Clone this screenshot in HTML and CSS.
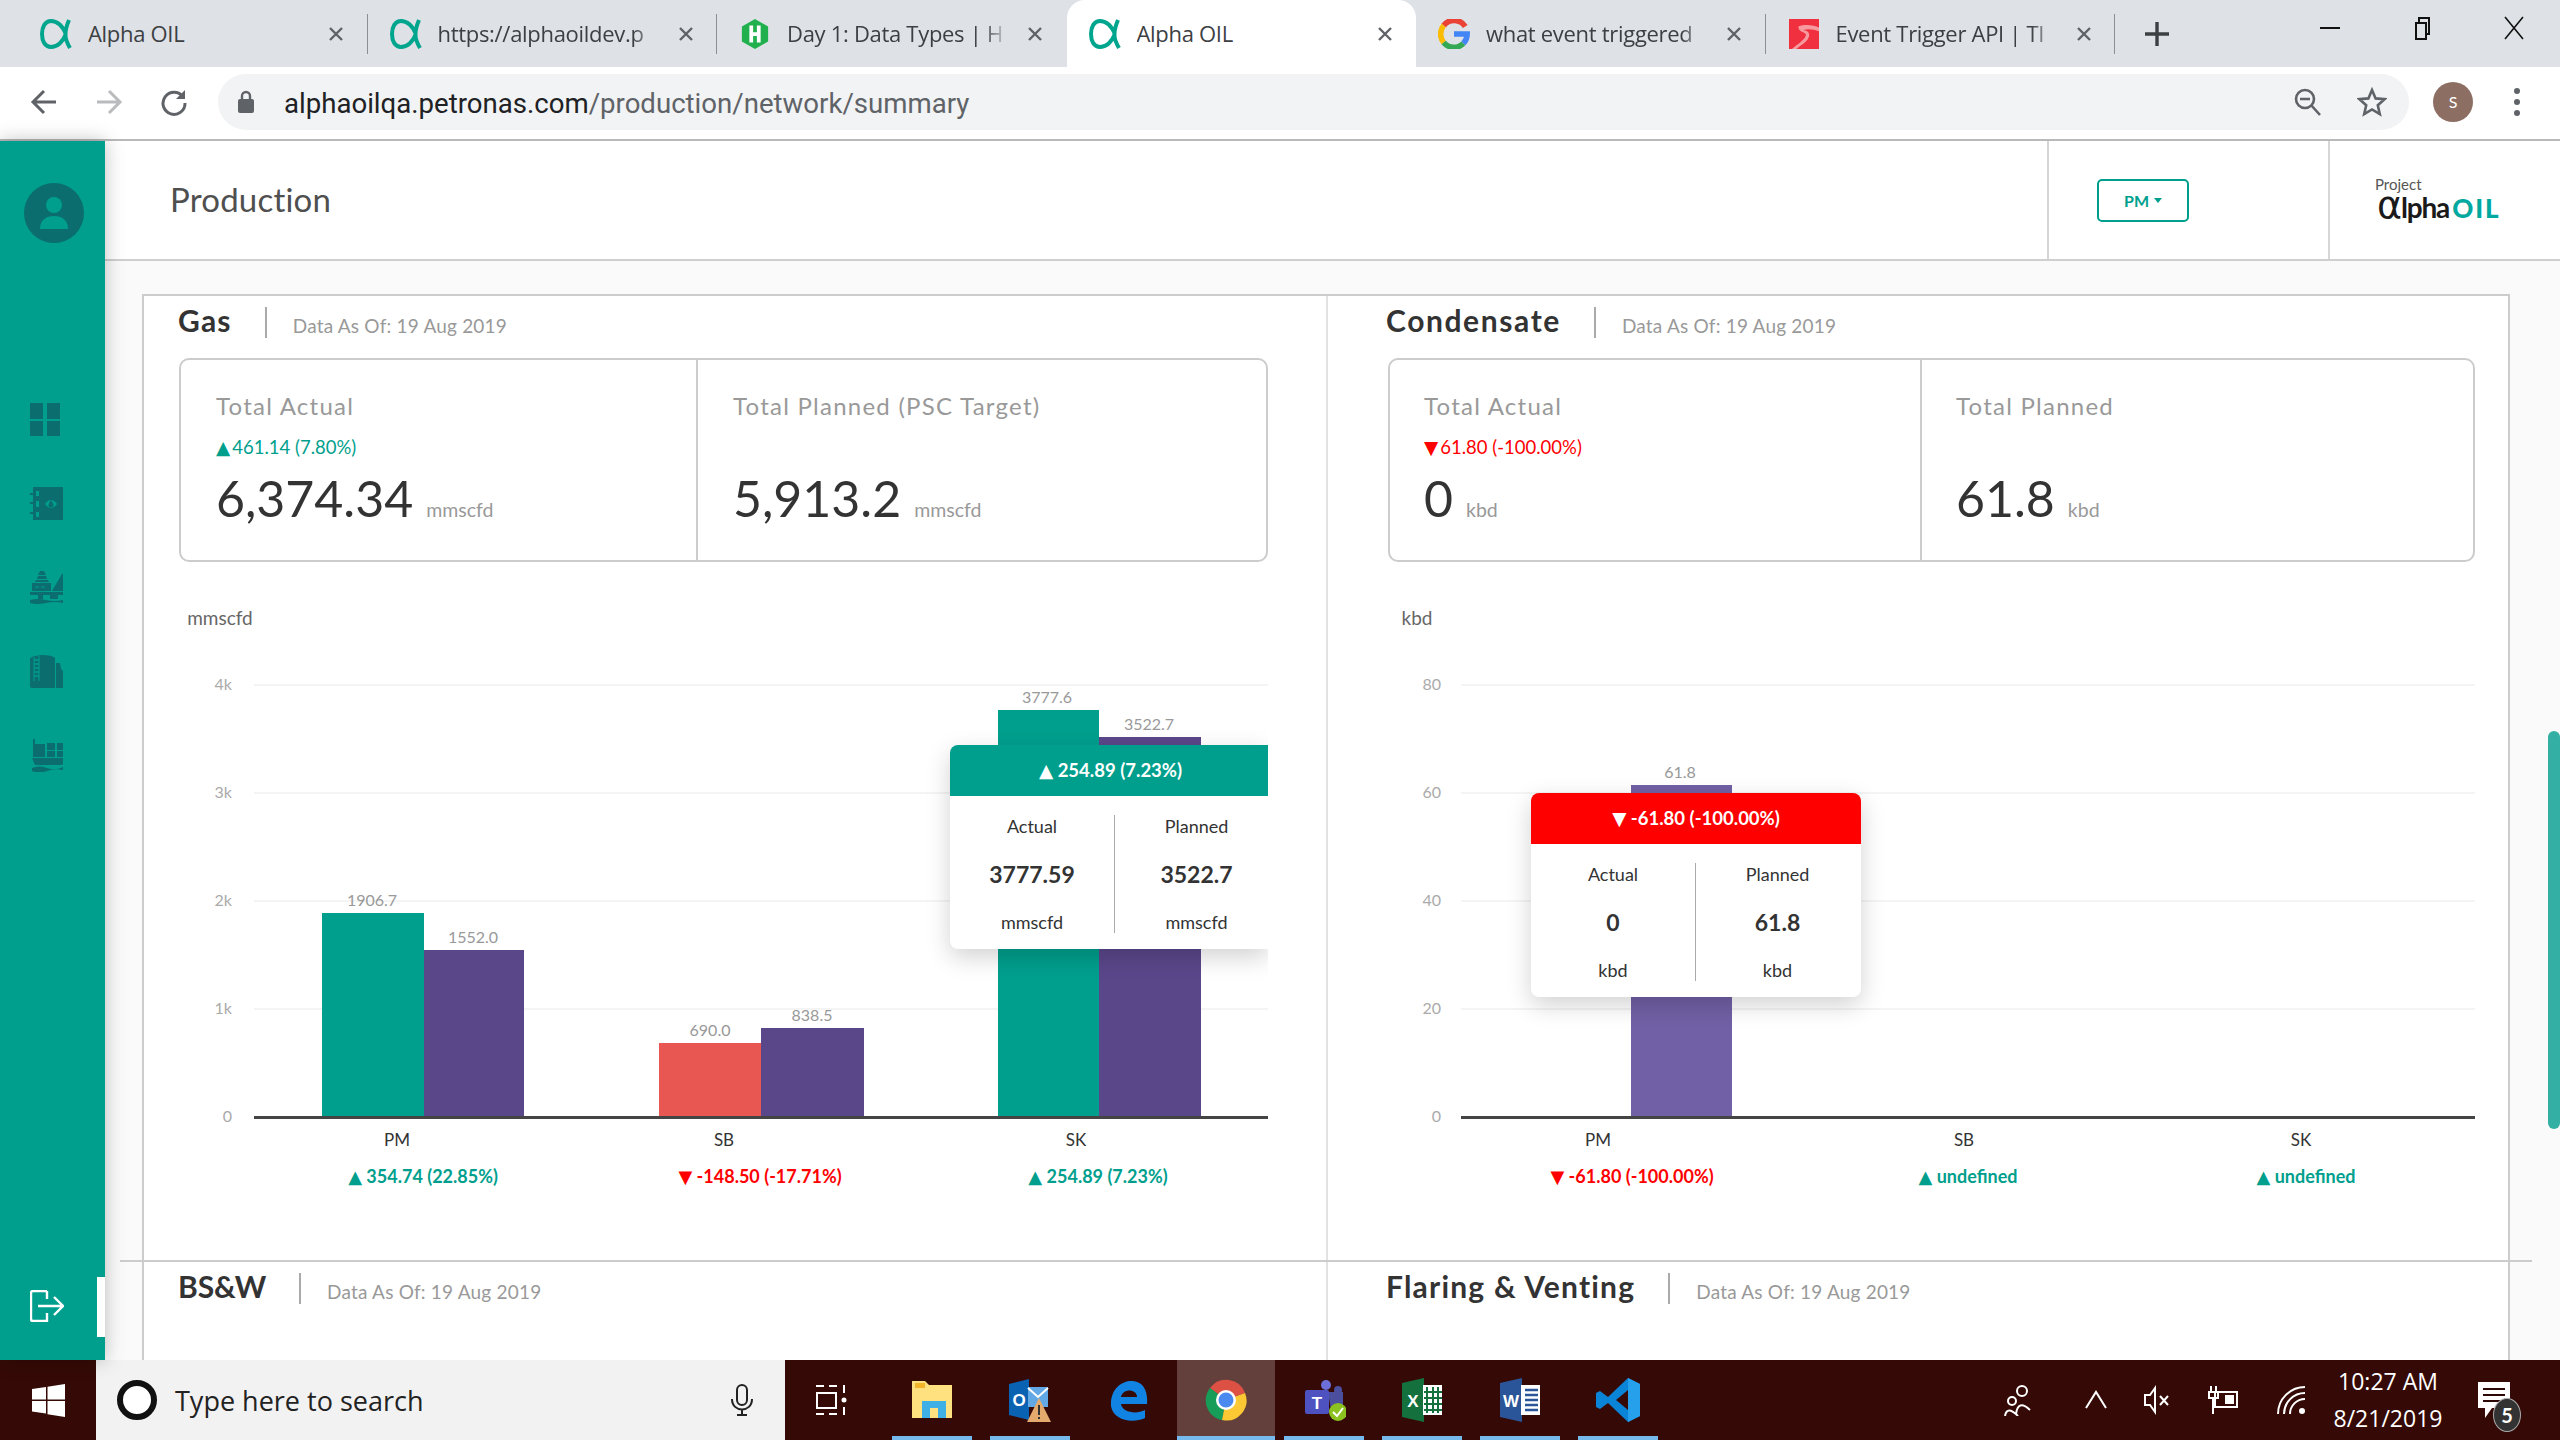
FILE: index.html
```html
<!DOCTYPE html>
<html lang="en">
<head>
  <meta charset="UTF-8" />
  <meta name="viewport" content="width=device-width, initial-scale=1" />
  <title>Alpha OIL</title>
  <link rel="stylesheet" href="styles.css">
</head>
<body>
  <svg class="defs" width="0" height="0">
    <symbol id="alpha" viewBox="0 0 32 30">
      <path d="M29 1C24 13 24 19 30 29M26 15C22 6 16 2 11 2C5 2 2 8 2 15C2 22 5 28 11 28C16 28 22 24 26 15" fill="none" stroke="#00a58e" stroke-width="4"/>
    </symbol>
    <symbol id="x" viewBox="0 0 16 16">
      <path d="M2 2L14 14M14 2L2 14" fill="none" stroke="#5f6368" stroke-width="2.4"/>
    </symbol>
  </svg>

  <!-- browser tabs -->
  <div class="tabstrip">
    <div class="tab">
      <svg class="favicon"><use href="#alpha"/></svg>
      <span class="tab-title">Alpha OIL</span>
      <svg class="tab-x"><use href="#x"/></svg>
    </div>
    <div class="tab">
      <svg class="favicon"><use href="#alpha"/></svg>
      <span class="tab-title fade">https://alphaoildev.p</span>
      <svg class="tab-x"><use href="#x"/></svg>
    </div>
    <div class="tab no-sep">
      <svg class="favicon" viewBox="0 0 30 32"><path d="M15 0L29 8V24L15 32L1 24V8Z" fill="#20b04e"/><path d="M9 7H13V14H17V7H21V25H17V18H13V25H9Z" fill="#fff"/></svg>
      <span class="tab-title fade">Day 1: Data Types | H</span>
      <svg class="tab-x"><use href="#x"/></svg>
    </div>
    <div class="tab active">
      <svg class="favicon"><use href="#alpha"/></svg>
      <span class="tab-title">Alpha OIL</span>
      <svg class="tab-x"><use href="#x"/></svg>
    </div>
    <div class="tab">
      <svg class="favicon" viewBox="0 0 32 32">
        <path d="M28 8A14 14 0 0 0 5 7" fill="none" stroke="#ea4335" stroke-width="6"/>
        <path d="M5 7A14 14 0 0 0 5 25" fill="none" stroke="#fbbc05" stroke-width="6"/>
        <path d="M5 25A14 14 0 0 0 26 26" fill="none" stroke="#34a853" stroke-width="6"/>
        <path d="M26 26C29 23 30 20 30 16H16" fill="none" stroke="#4285f4" stroke-width="6"/>
      </svg>
      <span class="tab-title fade">what event triggered</span>
      <svg class="tab-x"><use href="#x"/></svg>
    </div>
    <div class="tab">
      <svg class="favicon" viewBox="0 0 32 32"><rect width="32" height="32" fill="#f0303e"/><path d="M10 8C18 5 27 7 32 9V13C26 11 20 10 15 12C22 12 24 18 18 24C15 27 11 29 8 32H3C9 27 19 21 18 16C14 13 10 13 10 8Z" fill="#f79aa0"/></svg>
      <span class="tab-title fade">Event Trigger API | TI</span>
      <svg class="tab-x"><use href="#x"/></svg>
    </div>
    <svg class="new-tab" viewBox="0 0 26 26"><path d="M13 1V25M1 13H25" stroke="#3c4043" stroke-width="3.4"/></svg>
    <div class="win-btns">
      <svg class="win-btn" viewBox="0 0 24 24"><path d="M2 12H22" stroke="#111" stroke-width="2"/></svg>
      <svg class="win-btn" viewBox="0 0 24 24"><path d="M6 7H16V23H6ZM9 7V2H19V18H16" fill="none" stroke="#111" stroke-width="2"/></svg>
      <svg class="win-btn" viewBox="0 0 24 24"><path d="M3 1L21 23M21 1L3 23" stroke="#111" stroke-width="1.6"/></svg>
    </div>
  </div>

  <!-- address bar -->
  <div class="toolbar">
    <svg class="tool-icon" viewBox="0 0 28 28"><path d="M26 14H4M14 3L3 14L14 25" fill="none" stroke="#5f6368" stroke-width="3"/></svg>
    <svg class="tool-icon" viewBox="0 0 28 28"><path d="M2 14H24M14 3L25 14L14 25" fill="none" stroke="#b9bbbe" stroke-width="3"/></svg>
    <svg class="tool-icon" viewBox="0 0 28 28"><path d="M23 9A11 11 0 1 0 25 15" fill="none" stroke="#5f6368" stroke-width="3"/><path d="M25 2V11H16Z" fill="#5f6368"/></svg>
    <div class="omnibox">
      <svg class="lock" viewBox="0 0 18 24"><path d="M5 10V6A4 4 0 0 1 13 6V10" fill="none" stroke="#5f6368" stroke-width="2.4"/><rect x="1" y="9" width="16" height="14" rx="2" fill="#5f6368"/></svg>
      <span class="url"><span class="url-host">alphaoilqa.petronas.com</span>/production/network/summary</span>
      <svg class="omni-icon" viewBox="0 0 30 30"><circle cx="12" cy="12" r="9" fill="none" stroke="#5f6368" stroke-width="2.6"/><path d="M7 12H17M18 18L27 28" stroke="#5f6368" stroke-width="2.6"/></svg>
      <svg class="omni-icon" viewBox="0 0 30 30"><path d="M15 3L18.6 11.4L27.6 12.2L20.8 18.2L22.8 27L15 22.4L7.2 27L9.2 18.2L2.4 12.2L11.4 11.4Z" fill="none" stroke="#5f6368" stroke-width="2.6"/></svg>
    </div>
    <div class="avatar">S</div>
    <div class="kebab"><i></i><i></i><i></i></div>
  </div>

  <div class="app">
    <aside class="sidebar">
      <svg class="side-user" viewBox="0 0 60 60">
        <circle cx="30" cy="30" r="30" fill="#0b6d6e"/>
        <circle cx="30" cy="22" r="8" fill="#009f8d"/>
        <path d="M16 46C16 37 22 33 30 33C38 33 44 37 44 46Z" fill="#009f8d"/>
      </svg>
      <svg class="side-icon first" viewBox="0 0 33 33"><path d="M0 0H13V16H0ZM17 0H30V16H17ZM0 18H13V33H0ZM17 18H30V33H17Z" fill="#0b6d6e"/></svg>
      <svg class="side-icon" viewBox="0 0 33 33"><path d="M3 0H33V33H3V27H0V25H3V17H0V15H3V8H0V6H3Z" fill="#0b6d6e"/><path d="M6 4H9V9H6ZM6 14H9V20H6ZM6 25H9V30H6Z" fill="#009f8d"/><path d="M15 17Q21 9 27 17Q21 25 15 17Z" fill="#009f8d"/><path d="M21 13C19 16 18.5 17 18.5 18A2.500 2.500 0 0 0 23.5 18C23.5 17 23 16 21 13Z" fill="#0b6d6e"/></svg>
      <svg class="side-icon" viewBox="0 0 33 33"><path d="M10 0H14L16 4H8ZM8 5H16L17 8H7ZM6 9H18L19 11H5ZM2 12H21V20H2ZM22 20L32 3H33V20ZM0 21H33V24H28V28H20V24H13V28H8V24H0ZM0 29Q8 27 16 29T33 29V32Q25 30 16 32T0 32Z" fill="#0b6d6e"/><path d="M5 16H9M11 16H15" stroke="#009f8d"/></svg>
      <svg class="side-icon" viewBox="0 0 33 33"><path d="M0 4Q0 1 12 0Q22 0 25 3V33H2Q0 33 0 31ZM26 8H30L31 14L33 16V33H26Z" fill="#0b6d6e"/><path d="M4 2V26M9 1V26" stroke="#009f8d"/><path d="M4 5H9M4 9H9M4 13H9M4 17H9M4 21H9" stroke="#009f8d" stroke-width="1.500"/></svg>
      <svg class="side-icon" viewBox="0 0 33 33"><path d="M3 0H5V5H15V18H3ZM17 4H25V11H17ZM27 4H33V11H27ZM17 12H25V18H17ZM27 12H33V18H27ZM2 19H33V25Q33 26 30 26H5ZM2 29Q9 26 17 29T33 28V31Q25 29 17 32T2 32Z" fill="#0b6d6e"/></svg>
      <svg class="side-out" viewBox="0 0 34 32"><path d="M17 1H3Q1 1 1 3V29Q1 31 3 31H17V23M17 1V9M8 16H33M24 7L33 16L24 25" fill="none" stroke="#fff" stroke-width="2.400"/></svg>
      <div class="side-mark"></div>
    </aside>

    <main class="main">
      <header class="page-head">
        <div class="page-title">Production</div>
        <div class="head-cell pm-cell"><button class="pm-btn">PM</button></div>
        <div class="head-cell logo-cell">
          <div class="logo-project">Project</div>
          <div class="logo-name"><span class="logo-a">α</span>lpha<b>OIL</b></div>
        </div>
      </header>

      <div class="content">
        <div class="board">
          <section class="block">
            <div class="block-head">
              <h3>Gas</h3>
              <span class="as-of">Data As Of: 19 Aug 2019</span>
            </div>
            <div class="stats gas-stats">
              <div class="stat">
                <div class="stat-label">Total Actual</div>
                <div class="stat-delta up"><span class="tri">▲</span>461.14 (7.80%)</div>
                <div class="stat-value">6,374.34<small>mmscfd</small></div>
              </div>
              <div class="stat">
                <div class="stat-label">Total Planned (PSC Target)</div>
                <div class="stat-delta"></div>
                <div class="stat-value">5,913.2<small>mmscfd</small></div>
              </div>
            </div>
            <div class="chart">
              <svg class="chart-svg" width="1183" height="640" viewBox="144 600 1183 640">
                <text class="axis-unit" x="220" y="625">mmscfd</text>
                <g class="grid">
                  <path d="M254 685H1268M254 793H1268M254 901H1268M254 1009H1268"/>
                </g>
                <g class="y-label">
                  <text x="232" y="690">4k</text>
                  <text x="232" y="798">3k</text>
                  <text x="232" y="906">2k</text>
                  <text x="232" y="1014">1k</text>
                  <text x="232" y="1122">0</text>
                </g>
                <rect class="b-up" x="322" y="913" width="102" height="204"/>
                <rect class="b-plan" x="424" y="950" width="100" height="167"/>
                <rect class="b-down" x="659" y="1043" width="102" height="74"/>
                <rect class="b-plan" x="761" y="1028" width="103" height="89"/>
                <rect class="b-up" x="998" y="710" width="101" height="407"/>
                <rect class="b-plan" x="1099" y="737" width="102" height="380"/>
                <rect class="axis" x="254" y="1116" width="1014" height="3"/>
                <g class="bar-val">
                  <text x="372" y="906">1906.7</text>
                  <text x="473" y="943">1552.0</text>
                  <text x="710" y="1036">690.0</text>
                  <text x="812" y="1021">838.5</text>
                  <text x="1047" y="703">3777.6</text>
                  <text x="1149" y="730">3522.7</text>
                </g>
                <g class="cat">
                  <text x="397" y="1146">PM</text>
                  <text x="724" y="1146">SB</text>
                  <text x="1076" y="1146">SK</text>
                </g>
                <g class="cat-delta">
                  <text class="up" x="423" y="1183"><tspan class="tri">▲</tspan> 354.74 (22.85%)</text>
                  <text class="down" x="760" y="1183"><tspan class="tri">▼</tspan> -148.50 (-17.71%)</text>
                  <text class="up" x="1098" y="1183"><tspan class="tri">▲</tspan> 254.89 (7.23%)</text>
                </g>
              </svg>
              <div class="tip tip-gas">
                <div class="tip-head"><span class="tri">▲</span> 254.89 (7.23%)</div>
                <div class="tip-body">
                  <div class="tip-col"><span>Actual</span><b>3777.59</b><span>mmscfd</span></div>
                  <div class="tip-col"><span>Planned</span><b>3522.7</b><span>mmscfd</span></div>
                </div>
              </div>
            </div>
          </section>

          <section class="block right">
            <div class="block-head">
              <h3 class="wide">Condensate</h3>
              <span class="as-of">Data As Of: 19 Aug 2019</span>
            </div>
            <div class="stats cond-stats">
              <div class="stat">
                <div class="stat-label">Total Actual</div>
                <div class="stat-delta down"><span class="tri">▼</span>61.80 (-100.00%)</div>
                <div class="stat-value">0<small>kbd</small></div>
              </div>
              <div class="stat">
                <div class="stat-label">Total Planned</div>
                <div class="stat-delta"></div>
                <div class="stat-value">61.8<small>kbd</small></div>
              </div>
            </div>
            <div class="chart">
              <svg class="chart-svg" width="1180" height="640" viewBox="1328 600 1180 640">
                <text class="axis-unit" x="1417" y="625">kbd</text>
                <g class="grid">
                  <path d="M1461 685H2475M1461 793H2475M1461 901H2475M1461 1009H2475"/>
                </g>
                <g class="y-label">
                  <text x="1441" y="690">80</text>
                  <text x="1441" y="798">60</text>
                  <text x="1441" y="906">40</text>
                  <text x="1441" y="1014">20</text>
                  <text x="1441" y="1122">0</text>
                </g>
                <rect class="b-plan-hi" x="1631" y="785" width="101" height="332"/>
                <rect class="axis" x="1461" y="1116" width="1014" height="3"/>
                <g class="bar-val">
                  <text x="1680" y="778">61.8</text>
                </g>
                <g class="cat">
                  <text x="1598" y="1146">PM</text>
                  <text x="1964" y="1146">SB</text>
                  <text x="2301" y="1146">SK</text>
                </g>
                <g class="cat-delta">
                  <text class="down" x="1632" y="1183"><tspan class="tri">▼</tspan> -61.80 (-100.00%)</text>
                  <text class="up" x="1968" y="1183"><tspan class="tri">▲</tspan> undefined</text>
                  <text class="up" x="2306" y="1183"><tspan class="tri">▲</tspan> undefined</text>
                </g>
              </svg>
              <div class="tip tip-cond">
                <div class="tip-head"><span class="tri">▼</span> -61.80 (-100.00%)</div>
                <div class="tip-body">
                  <div class="tip-col"><span>Actual</span><b>0</b><span>kbd</span></div>
                  <div class="tip-col"><span>Planned</span><b>61.8</b><span>kbd</span></div>
                </div>
              </div>
            </div>
          </section>
        </div>

        <div class="board-rule"></div>

        <div class="board lower">
          <section class="block">
            <div class="block-head">
              <h3 class="tight">BS&amp;W</h3>
              <span class="as-of">Data As Of: 19 Aug 2019</span>
            </div>
          </section>
          <section class="block right">
            <div class="block-head">
              <h3>Flaring &amp; Venting</h3>
              <span class="as-of">Data As Of: 19 Aug 2019</span>
            </div>
          </section>
        </div>
        <div class="scroll-thumb"></div>
      </div>
    </main>
  </div>

  <!-- windows taskbar -->
  <footer class="taskbar">
    <div class="start">
      <svg viewBox="0 0 33 33" width="33" height="33"><path d="M0 5L14 3V15.500H0ZM15.500 2.800L33 0V15.500H15.500ZM0 17H14V29.500L0 27.500ZM15.500 17H33V33L15.500 30.300Z" fill="#fff"/></svg>
    </div>
    <div class="search">
      <span class="cortana"></span>
      <span class="search-text">Type here to search</span>
      <svg class="mic" viewBox="0 0 24 32"><rect x="7" y="1" width="10" height="20" rx="5" fill="none" stroke="#222" stroke-width="2"/><path d="M2 15C2 29 22 29 22 15M12 25V31M7 31H17" fill="none" stroke="#222" stroke-width="2"/></svg>
    </div>
    <div class="task task-view">
      <svg viewBox="0 0 32 32" width="32" height="32"><path d="M1 2H9M14 2H22M1 30H9M14 30H22" stroke="#fff" stroke-width="2"/><rect x="2" y="9" width="19" height="15" fill="none" stroke="#fff" stroke-width="2"/><circle cx="29" cy="16" r="2.500" fill="#fff"/><path d="M29 1V9M29 23V31" stroke="#fff" stroke-width="2"/></svg>
    </div>
    <div class="task open">
      <svg viewBox="0 0 42 42" width="42" height="42"><path d="M1 2H14L18 6H41V39H1Z" fill="#ffe27f"/><path d="M4 4H14V9H4Z" fill="#f5b52a"/><path d="M11 22H35V39H27V29H19V39H11Z" fill="#3fb0e6"/></svg>
    </div>
    <div class="task open">
      <svg viewBox="0 0 44 44" width="44" height="44"><path d="M1 6L21 1V42L1 37Z" fill="#0a62b3"/><rect x="20" y="9" width="20" height="20" fill="#62a8e5"/><path d="M20 10L30 19L40 10" fill="none" stroke="#fff" stroke-width="2"/><text x="11" y="28" class="app-letter">O</text><path d="M31 20L43 44H19Z" fill="#e3a96d"/><path d="M30 27H32V37H30ZM30 39H32V41H30Z" fill="#333"/></svg>
    </div>
    <div class="task">
      <svg viewBox="0 0 44 44" width="44" height="44"><path d="M5 28C4 10 17 2 27 3C38 4 42 14 41 26H15C16 34 30 37 39 32V40C26 46 7 42 5 28ZM15 19H31C31 11 17 10 15 19Z" fill="#1183e3"/></svg>
    </div>
    <div class="task running">
      <svg viewBox="0 0 44 44" width="44" height="44">
        <path d="M22 22L6 10A20 20 0 0 1 41 15Z" fill="#dd5044"/>
        <path d="M22 22L6 10A20 20 0 0 0 18 42Z" fill="#189d58"/>
        <path d="M22 22L41 15A20 20 0 0 1 18 42Z" fill="#fcc934"/>
        <circle cx="22" cy="22" r="10" fill="#fff"/><circle cx="22" cy="22" r="7.500" fill="#4a8af0"/>
      </svg>
    </div>
    <div class="task open">
      <svg viewBox="0 0 44 44" width="44" height="44"><circle cx="24" cy="7" r="5" fill="#6b6fd6"/><circle cx="36" cy="12" r="4" fill="#4c4f9e"/><path d="M26 14H41V28Q41 38 30 38Z" fill="#4c4f9e"/><rect x="3" y="12" width="24" height="24" rx="2" fill="#4d52c0"/><text x="15" y="31" class="app-letter">T</text><circle cx="36" cy="34" r="9" fill="#8bc220"/><path d="M31 34L35 38L41 30" fill="none" stroke="#fff" stroke-width="2"/></svg>
    </div>
    <div class="task open">
      <svg viewBox="0 0 44 44" width="44" height="44"><path d="M2 5L24 0V44L2 39Z" fill="#14713d"/><rect x="23" y="7" width="19" height="30" fill="#fff"/><path d="M27 9V35M33 9V35M38 9V35M24 14H42M24 20H42M24 26H42M24 32H42" stroke="#14713d" stroke-width="2"/><text x="13" y="29" class="app-letter">X</text></svg>
    </div>
    <div class="task open">
      <svg viewBox="0 0 44 44" width="44" height="44"><path d="M2 5L24 0V44L2 39Z" fill="#2a5699"/><rect x="23" y="7" width="19" height="30" fill="#fff"/><path d="M27 12H40M27 17H40M27 22H40M27 27H40M27 32H40" stroke="#2a5699" stroke-width="2.600"/><text x="13" y="29" class="app-letter">W</text></svg>
    </div>
    <div class="task open">
      <svg viewBox="0 0 44 44" width="44" height="44"><path d="M32 0L44 6V38L32 44L12 25L4 31L0 29V15L4 13L12 19ZM32 12L20 22L32 32Z" fill="#0a84d6"/><path d="M32 0L44 6V38L32 44Z" fill="#26a0ea"/></svg>
    </div>
    <div class="tray">
      <svg class="tray-icon" viewBox="0 0 32 32"><circle cx="20" cy="7" r="5" fill="none" stroke="#fff" stroke-width="2"/><circle cx="10" cy="17" r="4" fill="none" stroke="#fff" stroke-width="2"/><path d="M14 30Q16 15 28 26M3 32Q5 21 16 32" fill="none" stroke="#fff" stroke-width="2"/></svg>
      <svg class="tray-icon" viewBox="0 0 32 32"><path d="M6 24L16 8L26 24" fill="none" stroke="#fff" stroke-width="2"/></svg>
      <svg class="tray-icon" viewBox="0 0 32 32"><path d="M5 11H10L15 4V28L10 21H5ZM20 12L28 21M28 12L20 21" fill="none" stroke="#fff" stroke-width="2"/></svg>
      <svg class="tray-icon" viewBox="0 0 32 32"><rect x="8" y="8" width="22" height="15" fill="none" stroke="#fff" stroke-width="2"/><rect x="18" y="11" width="9" height="9" fill="#fff"/><path d="M4 2V8M9 2V8M2 8H11V14H2ZM6 14V30" fill="none" stroke="#fff" stroke-width="2"/></svg>
      <svg class="tray-icon" viewBox="0 0 32 32"><path d="M3 30A27 27 0 0 1 30 3M9 30A21 21 0 0 1 30 9M15 30A15 15 0 0 1 30 15" fill="none" stroke="#fff" stroke-width="2"/><circle cx="27" cy="27" r="3" fill="#fff"/></svg>
      <div class="clock"><div>10:27 AM</div><div>8/21/2019</div></div>
      <div class="notify">
        <svg viewBox="0 0 32 36" width="32" height="36"><path d="M0 0H32V26H14L7 36V26H0Z" fill="#fff"/><path d="M5 7H27M5 13H27M5 19H27" stroke="#2b0806" stroke-width="2"/></svg>
        <span class="badge">5</span>
      </div>
    </div>
  </footer>
</body>
</html>
```

FILE: styles.css
```css
* {
  box-sizing: border-box;
}

html, body {
  margin: 0;
  width: 2560px;
  height: 1440px;
  overflow: hidden;
}

body {
  display: flex;
  flex-direction: column;
  font-family: "Lato", "Open Sans", sans-serif;
  background: #fff;
  color: #333;
}

.defs {
  position: absolute;
}

/* tabs */
.tabstrip {
  display: flex;
  align-items: stretch;
  height: 67px;
  padding-left: 18px;
  background: #dee1e6;
  font-family: "Open Sans", sans-serif;
  font-size: 22px;
  color: #3c4043;
}

.tab {
  position: relative;
  display: flex;
  align-items: center;
  width: 349.5px;
  padding-left: 22px;
  flex-shrink: 0;
}

.tab::after {
  content: "";
  position: absolute;
  right: 0;
  top: 14px;
  height: 40px;
  width: 1px;
  background: #8b8e93;
}

.tab.no-sep::after,
.tab.active::after {
  display: none;
}

.tab.active {
  background: #fff;
  border-radius: 18px 18px 0 0;
}

.favicon {
  width: 32px;
  height: 30px;
  flex-shrink: 0;
}

.tab-title {
  margin: -2px 0 0 16px;
  width: 222px;
  overflow: hidden;
  white-space: nowrap;
  letter-spacing: -0.3px;
}

.tab-title.fade {
  -webkit-mask-image: linear-gradient(to right, #000 88%, transparent 100%);
  mask-image: linear-gradient(to right, #000 88%, transparent 100%);
}

.tab-x {
  width: 16px;
  height: 16px;
  margin-left: 18px;
  flex-shrink: 0;
}

.new-tab {
  width: 26px;
  height: 26px;
  margin: 21px 0 0 29px;
}

.win-btns {
  display: flex;
  margin-left: auto;
  gap: 68px;
  padding: 16px 34px 0 0;
}

.win-btn {
  width: 24px;
  height: 24px;
}

/* address bar */
.toolbar {
  display: flex;
  align-items: center;
  height: 74px;
  padding: 0 0 2px 30px;
  border-bottom: 2px solid #b9b9b9;
}

.tool-icon {
  width: 28px;
  height: 28px;
  margin-right: 37px;
}

.tool-icon:nth-child(3) {
  margin-right: 30px;
}

.omnibox {
  display: flex;
  align-items: center;
  width: 2191px;
  height: 56px;
  padding: 0 22px 0 19px;
  background: #f1f3f4;
  border-radius: 28px;
  font-family: "Roboto", sans-serif;
  font-size: 27.6px;
  color: #5f6368;
}

.lock {
  width: 18px;
  height: 24px;
  margin-right: 29px;
}

.url {
  flex: 1;
  padding-top: 2px;
}

.url-host {
  color: #202124;
}

.omni-icon {
  width: 30px;
  height: 30px;
  margin-left: 34px;
}

.avatar {
  width: 40px;
  height: 40px;
  margin-left: 24px;
  border-radius: 50%;
  background: #8d6e63;
  color: #fff;
  font-size: 16px;
  line-height: 40px;
  text-align: center;
}

.kebab {
  display: flex;
  flex-direction: column;
  gap: 5px;
  margin-left: 41px;
}

.kebab i {
  width: 6px;
  height: 6px;
  border-radius: 50%;
  background: #5f6368;
}

/* app shell */
.app {
  display: flex;
  height: 1219px;
}

.sidebar {
  position: relative;
  z-index: 2;
  display: flex;
  flex-direction: column;
  width: 105px;
  padding-left: 30px;
  background: #009f8d;
  box-shadow: 0 0 18px rgba(0, 0, 0, 0.25);
}

.side-user {
  width: 60px;
  height: 60px;
  margin: 42px 0 0 -6px;
}

.side-icon {
  width: 33px;
  height: 33px;
  margin-top: 51px;
}

.side-icon.first {
  margin-top: 160px;
}

.side-out {
  width: 34px;
  height: 32px;
  margin-top: auto;
  margin-bottom: 38px;
}

.side-mark {
  position: absolute;
  right: 0;
  bottom: 23px;
  width: 8px;
  height: 60px;
  background: #fff;
}

.main {
  flex: 1;
  display: flex;
  flex-direction: column;
  min-width: 0;
}

.page-head {
  display: flex;
  align-items: stretch;
  height: 120px;
  border-bottom: 2px solid #cfcfcf;
  background: #fff;
}

.page-title {
  flex: 1;
  padding: 0 0 0 65px;
  font-size: 33px;
  letter-spacing: 0.2px;
  line-height: 116px;
  color: #4f4f4f;
}

.head-cell {
  border-left: 2px solid #d6d6d6;
}

.pm-cell {
  width: 281px;
  padding: 38px 0 0 48px;
}

.pm-btn {
  display: flex;
  align-items: center;
  justify-content: center;
  width: 92px;
  height: 43px;
  padding: 0;
  background: #fff;
  border: 2px solid #009f8d;
  border-radius: 5px;
  color: #009f8d;
  font-family: inherit;
  font-size: 16px;
  font-weight: 700;
}

.pm-btn::after {
  content: "";
  margin-left: 5px;
  border-left: 4px solid transparent;
  border-right: 4px solid transparent;
  border-top: 5px solid #009f8d;
}

.logo-cell {
  width: 232px;
  padding: 36px 0 0 45px;
}

.logo-project {
  font-size: 15px;
  font-weight: 400;
  line-height: 15px;
  color: #555;
}

.logo-name {
  display: flex;
  align-items: baseline;
  height: 30px;
  margin-left: 2px;
  font-size: 28px;
  font-weight: 700;
  line-height: 30px;
  letter-spacing: -1.2px;
  color: #1a1a1a;
}

.logo-a {
  font-family: "DejaVu Sans", sans-serif;
  font-size: 38px;
  font-weight: 400;
  line-height: 20px;
  letter-spacing: -1px;
}

.logo-name b {
  margin-left: 3px;
  letter-spacing: 2px;
  color: #00a8a0;
  font-weight: 900;
  font-size: 26px;
}

/* report */
.content {
  position: relative;
  flex: 1;
  padding: 33px 0 0 37px;
  background: #fafafa;
  overflow: hidden;
}

.board {
  display: flex;
  width: 2368px;
  height: 966px;
  background: #fff;
  border: 2px solid #ccc;
  border-bottom: 0;
}

.board.lower {
  height: 200px;
  border-top: 0;
}

.board-rule {
  width: 2412px;
  height: 2px;
  margin-left: -22px;
  background: #ccc;
}

.block {
  width: 1184px;
  border-right: 2px solid #e2e2e2;
  padding-left: 34px;
}

.block.right {
  width: 1180px;
  border-right: 0;
  padding-left: 58px;
}

.block-head {
  display: flex;
  align-items: center;
  height: 31px;
  margin-top: 11px;
}

.block-head h3 {
  height: 31px;
  margin: 0;
  padding-right: 33px;
  border-right: 2px solid #aaa;
  font-size: 30px;
  font-weight: 700;
  letter-spacing: 1.2px;
  line-height: 27px;
  color: #333;
}

.block-head h3.wide {
  letter-spacing: 1.6px;
}

.block-head h3.tight {
  letter-spacing: -0.1px;
}

.as-of {
  margin: 5px 0 0 26px;
  font-size: 19px;
  letter-spacing: 0.2px;
  color: #999;
}

.stats {
  display: flex;
  width: 1087px;
  height: 204px;
  margin: 20px 0 0 2px;
  border: 2px solid #ccc;
  border-radius: 10px;
}

.gas-stats {
  width: 1089px;
  margin-left: 1px;
}

.stat {
  padding: 29px 0 0 34px;
}

.stat + .stat {
  flex: 1;
  border-left: 2px solid #ccc;
}

.gas-stats .stat {
  padding-left: 35px;
}

.gas-stats .stat:first-child {
  width: 515px;
}

.cond-stats .stat:first-child {
  width: 530px;
}

.stat-label {
  font-size: 24px;
  letter-spacing: 1.25px;
  line-height: 34px;
  color: #999;
}

.stat-delta {
  height: 24px;
  margin-top: 12px;
  font-size: 18.5px;
  line-height: 24px;
}

.stat-delta .tri {
  margin-right: 2px;
}

.stat-value {
  margin-top: 9px;
  font-size: 50px;
  line-height: 60px;
  color: #333;
}

.stat-value small {
  margin-left: 13px;
  font-size: 19.5px;
  color: #999;
}

.tri {
  font-family: "DejaVu Sans", sans-serif;
}

.up {
  color: #009f8d;
  fill: #009f8d;
}

.down {
  color: #f00;
  fill: #f00;
}

/* charts */
.chart {
  position: relative;
  width: 1180px;
  height: 640px;
  margin: 38px 0 0 -34px;
}

.right .chart {
  margin-left: -58px;
}

.chart-svg {
  display: block;
  font-family: "Lato", sans-serif;
}

.axis-unit {
  fill: #666;
  font-size: 19px;
  text-anchor: middle;
}

.grid path {
  stroke: #f4f4f4;
  stroke-width: 2;
  fill: none;
}

.y-label text {
  fill: #aaa;
  font-size: 16px;
  text-anchor: end;
}

.b-up {
  fill: #009f8d;
}

.b-plan {
  fill: #5a478a;
}

.b-plan-hi {
  fill: #7160a5;
}

.b-down {
  fill: #e85752;
}

.axis {
  fill: #444;
}

.bar-val text {
  fill: #999;
  font-size: 16px;
  text-anchor: middle;
}

.cat text {
  fill: #333;
  font-size: 17px;
  text-anchor: middle;
}

.cat-delta text {
  font-size: 18px;
  font-weight: 700;
  text-anchor: middle;
}

.tip {
  position: absolute;
  background: #fff;
  border-radius: 8px;
  box-shadow: 0 8px 24px rgba(0, 0, 0, 0.18);
  overflow: hidden;
}

.tip-gas {
  left: 806px;
  top: 145px;
  width: 318px;
  height: 204px;
  border-radius: 8px 0 0 8px;
  clip-path: inset(-30px 0 -40px -30px);
}

.tip-cond {
  left: 203px;
  top: 193px;
  width: 330px;
  height: 204px;
}

.tip-head {
  height: 51px;
  color: #fff;
  font-size: 18.5px;
  font-weight: 700;
  line-height: 51px;
  text-align: center;
}

.tip-gas .tip-head {
  padding-left: 3px;
  background: #009f8d;
}

.tip-cond .tip-head {
  background: #f00;
}

.tip-body {
  display: flex;
  height: 118px;
  margin-top: 19px;
}

.tip-col {
  flex-shrink: 0;
  width: 164px;
  display: flex;
  flex-direction: column;
  justify-content: space-between;
  align-items: center;
  font-size: 18px;
  line-height: 22px;
  color: #333;
}

.tip-col + .tip-col {
  border-left: 1px solid #aaa;
}

.tip-col b {
  font-size: 23px;
}

.scroll-thumb {
  position: absolute;
  right: 0;
  top: 470px;
  width: 12px;
  height: 398px;
  background: #33b0a3;
  border-radius: 6px;
}

/* taskbar */
.taskbar {
  display: flex;
  height: 80px;
  background: #350a06;
  color: #fff;
}

.start {
  display: flex;
  align-items: center;
  width: 96px;
  padding-left: 32px;
}

.search {
  display: flex;
  align-items: center;
  width: 689px;
  background: #f2f2f2;
  padding-left: 21px;
  font-family: "Open Sans", sans-serif;
  font-size: 27px;
  color: #222;
}

.cortana {
  width: 40px;
  height: 40px;
  border: 6px solid #111;
  border-radius: 50%;
  background: #fff;
}

.search-text {
  flex: 1;
  margin-left: 18px;
}

.mic {
  width: 24px;
  height: 32px;
  margin-right: 31px;
}

.task {
  position: relative;
  display: flex;
  align-items: center;
  justify-content: center;
  width: 98px;
}

.task-view {
  padding-right: 6px;
}

.task.open::after,
.task.running::after {
  content: "";
  position: absolute;
  left: 9px;
  right: 9px;
  bottom: 0;
  height: 4px;
  background: #76b9ed;
}

.task.running {
  background: #63403c;
}

.task.running::after {
  left: 0;
  right: 0;
}

.app-letter {
  fill: #fff;
  font-family: "Liberation Sans", sans-serif;
  font-size: 17px;
  font-weight: 700;
  text-anchor: middle;
}

.tray {
  display: flex;
  align-items: center;
  margin-left: auto;
}

.tray-icon {
  width: 32px;
  height: 32px;
  margin-right: 36px;
}

.tray-icon:nth-child(1) {
  margin-right: 46px;
}

.tray-icon:nth-child(2) {
  margin-right: 28px;
}

.tray-icon:nth-child(3) {
  margin-right: 35px;
}

.tray-icon:nth-child(5) {
  margin-right: 21px;
}

.clock {
  width: 120px;
  margin: 0 30px 0 0;
  font-family: "Open Sans", sans-serif;
  font-size: 23px;
  line-height: 37px;
  text-align: center;
}

.notify {
  position: relative;
  width: 32px;
  height: 36px;
  margin-right: 50px;
}

.badge {
  position: absolute;
  left: 15px;
  top: 16px;
  width: 28px;
  height: 34px;
  border-radius: 50%;
  border: 1px solid #aaa;
  background: #333;
  font-size: 20px;
  font-weight: 700;
  line-height: 32px;
  text-align: center;
}
```
